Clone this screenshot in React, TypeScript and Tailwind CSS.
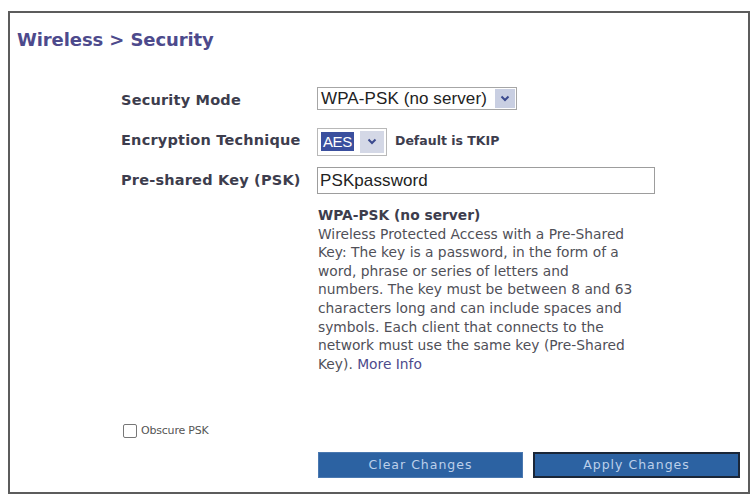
import React from "react";

const Chevron = () => (
  <svg width="10" height="7" viewBox="0 0 10 7">
    <path d="M1.5 1.5 L5 5 L8.5 1.5" fill="none" stroke="#3b4a8e" strokeWidth="2" />
  </svg>
);

const descLines = [
  "Wireless Protected Access with a Pre-Shared",
  "Key: The key is a password, in the form of a",
  "word, phrase or series of letters and",
  "numbers. The key must be between 8 and 63",
  "characters long and can include spaces and",
  "symbols. Each client that connects to the",
  "network must use the same key (Pre-Shared",
];

const labelCls =
  "w-[196px] pl-[111px] box-content mt-[11px] text-[14.5px] leading-[18px] font-bold text-[#3d3d4d] whitespace-nowrap tracking-[0.2px]";

export default function App() {
  return (
    <div className="w-[753px] h-[495px] bg-white overflow-hidden pt-[11px] pl-[8px]" style={{ fontFamily: '"DejaVu Sans", Verdana, sans-serif' }}>
      <div className="w-[742px] h-[483px] border-2 border-[#5c5c5c] flex flex-col">
        <div className="ml-[7px] mt-[15px] h-[24px] leading-[24px] text-[18px] font-bold text-[#4d4a8c] tracking-[-0.1px]">
          Wireless &gt; Security
        </div>

        <div className="mt-[28px] flex flex-col">
          <div className="flex h-[40px]">
            <div className={labelCls}>Security Mode</div>
            <div className="mt-[7px] w-[200px] h-[23px] border border-[#a6a6a6] flex items-center justify-between pl-[3px] pr-[1px]">
              <span className="text-[17px] leading-[20px] text-[#222] tracking-[0.1px] whitespace-nowrap" style={{ fontFamily: '"Liberation Sans", Arial, sans-serif' }}>
                WPA-PSK (no server)
              </span>
              <span className="w-[20px] h-[19px] bg-[#c9cfe2] flex items-center justify-center">
                <Chevron />
              </span>
            </div>
          </div>

          <div className="flex h-[40px]">
            <div className={labelCls}>Encryption Technique</div>
            <div className="mt-[3px] flex items-center">
              <div className="w-[70px] h-[28px] border border-[#b8b8b8] flex items-center justify-between pl-[3px] pr-[2px]">
                <span className="h-[19px] px-[2px] bg-[#3a4f9e] text-white text-[15px] leading-[19px] tracking-[-0.4px]" style={{ fontFamily: '"Liberation Sans", Arial, sans-serif' }}>
                  AES
                </span>
                <span className="w-[24px] h-[22px] bg-[#d4d8e6] flex items-center justify-center">
                  <Chevron />
                </span>
              </div>
              <span className="ml-[8px] text-[12.5px] font-bold text-[#3d3d4d] whitespace-nowrap">Default is TKIP</span>
            </div>
          </div>

          <div className="flex h-[40px]">
            <div className={labelCls}>Pre-shared Key (PSK)</div>
            <div className="mt-[7px] w-[338px] h-[27px] border border-[#9d9d9d] flex items-center pl-[2px]">
              <span className="text-[17px] leading-[20px] text-[#222] tracking-[0.1px]" style={{ fontFamily: '"Liberation Sans", Arial, sans-serif' }}>
                PSKpassword
              </span>
            </div>
          </div>
        </div>

        <div className="ml-[308px] mt-[6px] text-[13.8px] leading-[18.6px] text-[#505058] whitespace-nowrap">
          <div className="font-bold text-[#3d3d4d]">WPA-PSK (no server)</div>
          {descLines.map((l) => (
            <div key={l}>{l}</div>
          ))}
          <div>
            Key). <span className="text-[#4d4a8c]">More Info</span>
          </div>
        </div>

        <div className="ml-[113px] mt-[50px] flex items-center h-[15px]">
          <span className="w-[14px] h-[14px] border border-[#777] rounded-[2px] bg-white" />
          <span className="ml-[4px] text-[11px] text-[#555] whitespace-nowrap tracking-[-0.2px]">Obscure PSK</span>
        </div>

        <div className="ml-[308px] mt-[14px] flex gap-[10px]">
          <div className="w-[205px] h-[26px] bg-[#2c62a2] border border-[#4a78b0] flex items-center justify-center text-[12.5px] tracking-[1px] text-[#bcd0ea] whitespace-nowrap">
            Clear Changes
          </div>
          <div className="w-[207px] h-[26px] bg-[#2c62a2] border-2 border-[#1a2638] flex items-center justify-center text-[12.5px] tracking-[1px] text-[#bcd0ea] whitespace-nowrap">
            Apply Changes
          </div>
        </div>
      </div>
    </div>
  );
}
